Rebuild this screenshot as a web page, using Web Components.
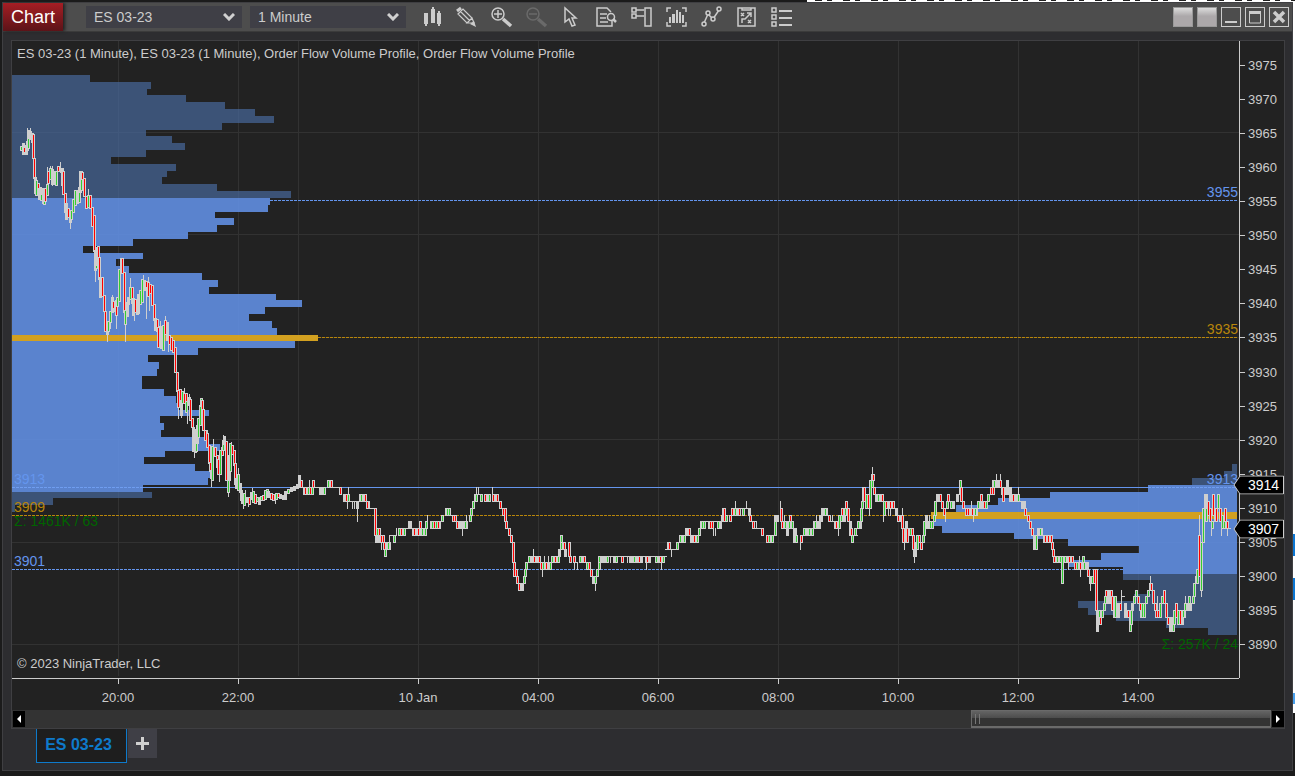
<!DOCTYPE html>
<html lang="en">
<head>
<meta charset="utf-8">
<title>Chart - ES 03-23</title>
<style>
html,body{margin:0;height:100%}
body{background:
 linear-gradient(#0d77d3,#0d77d3) right 534px/2px 22px no-repeat,
 linear-gradient(#0d77d3,#0d77d3) right 578px/2px 22px no-repeat,
 linear-gradient(#4aa0ec,#4aa0ec) right 693px/2px 11px no-repeat,
 repeating-linear-gradient(90deg,#222 0 7px,transparent 7px 12px,#222 12px 17px,transparent 17px 28px) right top/480px 1px no-repeat,
 linear-gradient(90deg,#1b1b1b 807px,#fff 807px) top/100% 2px no-repeat,
 linear-gradient(90deg,transparent 50%,#fff 50%) right top/4px 713px no-repeat,#1b1b1b;
 box-sizing:border-box;padding:2px 2px 5px;display:flex;overflow:hidden;
 font-family:"Liberation Sans",Arial,sans-serif}
</style>
</head>
<body>
<trader-window></trader-window>
<script>
const define=(name,html,setup)=>customElements.define(name,class extends HTMLElement{
  constructor(){super();this.attachShadow({mode:'open'}).innerHTML=html;}
  connectedCallback(){if(setup&&!this.ready){this.ready=true;setup.call(this,this.shadowRoot);}}
});

define('drop-down',`<style>
:host{display:block;width:156px;height:22px;position:relative}
select{appearance:none;width:100%;height:100%;margin:0;border:0;border-radius:0;padding:0 24px 0 8px;background:#3f3f46;color:#ccc;font:14px "Liberation Sans",Arial,sans-serif}
svg{position:absolute;right:7px;top:7px;pointer-events:none}
</style><select></select><svg width="12" height="8" fill="none" stroke="#d0d0d0" stroke-width="3"><path d="M1 1 6 6 11 1"/></svg>`,
function(r){const s=r.querySelector('select');s.setAttribute('aria-label',this.getAttribute('label'));s.add(new Option(this.getAttribute('value')));});

const glyphs={
 'Chart style':'<path fill="#ccc" stroke="none" d="M3 6h4v11H6v2H4v-2H3zM10 2h1V0h2v2h1v14h-4zM16 6h1V4h2v2h1v11h-1v2h-2v-2h-1z"/>',
 'Drawing tools':'<path stroke-width="3" d="m1 4 4-3"/><path stroke-width="1.2" d="m2 7 5-5 9 9-5 5zM4.500 4.500l9 9M11 16l5-5 2 5z"/><path fill="#ccc" stroke="none" d="m14 17 4-3 2 6z"/>',
 'Zoom in':'<circle cx="7" cy="7" r="6"/><path d="M3 7h8M7 3v8"/><path stroke-width="3.5" d="m12 12 8 7"/>',
 'Zoom out':'<g stroke="#6a6a6a"><circle cx="7" cy="7" r="6"/><path d="M3 7h8"/><path stroke-width="3.5" d="m12 12 8 7"/></g>',
 'Cursor':'<path d="M4 1v14l4-3 3 7 3-1-3-7h4z"/>',
 'Data box':'<path d="M15 5l-4-4H1v18h15v-5M4 7h7M4 11h6M4 15h8"/><circle cx="15" cy="10" r="3.5"/><path stroke-width="2.5" d="m17 12 3 3"/>',
 'Chart trader':'<path d="M1 1h4v4H1zM1 7h4v4H1zM5 3h8M5 9h8M14 1h6v18h-6z"/>',
 'Indicators':'<path d="M1 5V1h4M16 1h4v4M20 15v4h-4M5 19H1v-4"/><path fill="#ccc" stroke="none" d="M3 10h2v6H3zM6 7h3v9H6zM10 3h2v13h-2zM13 5h2v11h-2zM16 8h2v8h-2z"/>',
 'Strategies':'<path d="M3 16 7 7l5 5 6-9"/><g fill="#4d4d4d"><circle cx="3" cy="17" r="2"/><circle cx="7" cy="6" r="2"/><circle cx="12" cy="12" r="2"/><circle cx="18" cy="2" r="2"/></g>',
 'Analyzer':'<path d="M2 1h17v18H2zM6 1v2h9V1M5 6l3 3M8 6l-3 3M12 13l3 3M15 13l-3 3M6 16v-4h3l6-6M11 6h4v4"/>',
 'Properties':'<path d="M1 1h4v4H1zM1 8h4v4H1zM1 15h4v4H1z"/><path stroke-width="2" d="M8 4h13M8 11h13M8 18h13"/>'};

define('tool-bar',`<style>
:host{display:flex}
button{width:35px;height:28px;border:0;padding:0;background:none;display:grid;place-items:center}
svg{display:block;overflow:visible;fill:none;stroke:#ccc;stroke-width:1.5}
</style>`,function(r){for(const k in glyphs)r.innerHTML+=`<button aria-label="${k}"><svg width="21" height="21">${glyphs[k]}</svg></button>`;});

define('window-buttons',`<style>
:host{display:flex;gap:4px}
button{box-sizing:border-box;width:20px;height:20px;border:1px solid #ccc;background:none;padding:0;display:grid;place-items:center}
.link{border-color:#999;background:linear-gradient(#dcdcdc,#aca8aa 45%)}
svg{display:block;fill:none;stroke:#ccc}
</style><button class="link" aria-label="Instrument link"></button><button class="link" aria-label="Interval link"></button>
<button aria-label="Minimize"><svg width="18" height="18"><path stroke-width="2" d="M3 14h12"/></svg></button>
<button aria-label="Maximize"><svg width="18" height="18"><path d="M3.500 4v11h11V4"/><path stroke-width="3" d="M3 4.500h12"/></svg></button>
<button aria-label="Close"><svg width="18" height="18"><path stroke-width="3.5" d="m4 4 10 10M14 4 4 14"/></svg></button>`);

define('title-bar',`<style>
:host{display:flex;align-items:center;height:28px;background:#4d4d4d;border-bottom:1px solid #3b3b3b;flex:none}
.name{align-self:stretch;width:60px;flex:none;border:0;padding:0;margin-right:23px;background:linear-gradient(#a51e24,#5c1318);color:#fff;font:18px "Liberation Sans",Arial,sans-serif;box-shadow:2px 0 3px #222}
drop-down{margin-right:8px;flex:none}
window-buttons{margin-left:auto;margin-right:3px}
</style><button class="name">Chart</button><drop-down label="Instrument" value="ES 03-23"></drop-down><drop-down label="Interval" value="1 Minute"></drop-down><tool-bar></tool-bar><window-buttons></window-buttons>`);

/* ---- chart data ---- */
const BASE=3890, Y=p=>Math.floor(644.8-(p-BASE)*6.83);
// volume per price, as the right edge of each bar, from 3973 down
const leftProfile=[90,151,147,186,225,255,274,222,146,172,185,146,111,176,167,162,217,291,270,268,215,234,217,188,133,83,143,116,129,202,218,209,276,302,265,249,272,277,318,295,198,148,159,157,142,142,164,176,178,209,160,164,161,207,220,165,144,195,210,208,143,152,53,15];
// left edge of each bar, from 3916 down
const rightProfile=[1232,1224,1192,1148,1050,998,956,931,933,942,1014,1068,1139,1101,1068,1123,1123,1151,1151,1134,1078,1088,1116,1166,1208];
// overnight sell-off: x, top, bottom, direction
const fall=`21 146 150 g,23 143 154,24 147 152 r,26 145 154,27 141 150,28 137 148 g,28 130 138,30 131 139,32 133 142,33 134 158 r,34 158 178 r,35 177 193,36 180 195 g,38 183 194 r,39 188 199 r,40 187 198,41 194 200 g,43 188 203,44 198 204 g,45 188 201 r,47 184 195 g,48 171 183 r,50 168 179 g,52 169 184,53 173 181 r,54 171 184,56 171 185 g,58 166 171 r,61 168 172 r,62 168 185,63 171 194 r,65 193 212 r,66 203 219,68 208 217 r,70 212 222,71 210 219 g,73 199 212 g,75 190 205 g,77 190 203,79 187 202 g,80 171 192,81 179 190 g,82 172 179 r,84 178 196 r,86 196 208 r,88 195 207 g,90 195 208 r,92 207 226 r,94 215 251 r,95 250 270,96 262 268 g,97 247 265,98 246 257 r,99 257 279 r,100 277 297,102 277 296 r,104 295 311 r,105 311 331 r,107 327 334,108 321 331 g,110 311 322 g,112 297 312,113 301 308 r,115 301 311,116 300 315 r,117 297 306 g,119 269 301 g,121 258 273 g,122 258 273 r,124 272 312 r,125 310 324 g,127 302 316,128 297 304,130 287 299 g,132 287 303 r,133 298 315,135 299 312 r,137 304 314 g,138 294 313,140 290 304 g,142 279 302 g,144 280 290,146 281 287 r,148 282 296 r,150 284 293 r,152 285 305 r,154 304 320 r,155 318 330,157 319 331 r,158 327 347 r,160 326 343,161 328 348,163 325 350 g,165 320 334 r,167 322 340,169 335 344 r,171 337 350 r,173 340 352 r,175 347 372 r,177 372 391 r,178 390 407 r,180 389 400 r,181 400 415,182 391 403 g,184 393 403 r,186 393 404 r,186 401 412 g,189 397 405,190 399 420 r,192 418 427 r,193 427 451,194 440 450 g,195 429 452,196 441 451 g,197 425 443,198 418 437 g,200 405 425 g,201 398 406 g,202 400 413 r,203 409 430 r,205 430 440 r,207 433 447 r,209 445 463 r,210 462 471 r,211 470 478,212 446 480 g,215 447 456 r,217 455 467 r,218 459 474 r,220 450 474 g,222 447 455 r,223 440 450 g,224 436 444,226 441 480 r,228 477 492 g,229 455 480,230 443 471 g,232 445 454 r,234 450 465 r,235 463 484 r,236 478 488,238 474 490 g,240 483 492,241 490 500,242 495 503,244 493 505 g,247 497 502,249 497 504 r,251 492 499,253 491 502 g,255 494 503 r,257 497 501 g,259 497 504,261 496 500 g,263 495 500 r,265 490 499 g,267 489 494 g,268 491 497,271 493 499 r,273 494 500 r,276 493 499 g,278 493 497 r,280 494 498,283 495 499,285 491 499,288 489 493 g,291 487 491,294 486 490,297 484 488,299 475 487`;
const fallWicks=`27 128 150,30 128 138,47 167 186,50 166 172,52 166 186,60 162 170,70 218 229,82 171 174,88 189 197,95 265 282,104 295 320,107 330 342,110 318 329,112 295 300,116 310 329,125 322 342,130 278 290,134 310 321,143 275 280,146 285 319,148 277 284,149 290 311,160 321 330,163 345 350,165 316 322,168 335 352,178 405 419,181 410 418,184 388 395,187 408 424,189 394 399,194 450 458,207 430 435,211 475 487,213 439 450,219 470 482,223 435 440,228 490 497,231 442 447,238 468 476,243 500 509,245 490 496,248 500 507,252 488 494,266 489 492,275 496 504`;
// rest of the session: x, high, low in points over 3890, direction
const rest=`301 24 23 r,305 23 22 r,308 23 22 g,310 23 22 r,312 23 22 g,313 24 23 r,324 23 22 g,328 24 23 g,331 24 23 r,340 23 22 r,346 22 21 r,348 22 21 g,361 22 21 g,365 22 21 r,367 21 20 r,375 20 16 r,376 16 15,377 17 16 g,379 17 16 r,379 16 15,381 16 15 r,383 16 15 r,384 15 14 r,385 14 13 g,388 15 14 g,394 16 15 g,399 17 16 g,401 17 16 r,404 17 16 g,414 17 16 r,418 17 16 r,420 18 17 r,422 17 16 g,425 17 16 g,426 18 17 g,432 18 17 g,434 18 17 r,436 18 17 g,438 18 17 r,442 19 18 g,447 20 19 g,449 20 19 g,453 19 18 r,455 19 18 r,457 18 17 r,459 18 17,465 18 17 g,470 19 18 g,471 20 19 g,473 21 20 g,475 22 21,476 22 21 g,481 22 21 g,485 22 21 r,489 22 21 g,493 22 21 r,497 22 21 r,500 21 20 r,503 20 19 r,505 20 18 r,506 18 17 r,509 17 16 r,511 16 15 r,513 15 12 r,514 12 10 r,516 11 10 r,517 10 9 r,519 9 8 r,522 9 8,524 10 9 g,525 11 10 g,526 12 11 g,529 13 12 g,534 13 12 r,539 13 12 r,541 12 11 r,543 12 11 g,546 12 11 r,550 12 11 g,552 13 12 g,555 13 12 r,558 13 12 g,559 14 13,561 15 14 g,561 16 15 g,564 15 14 r,565 14 13,569 15 13 r,570 13 12 r,574 13 12 r,580 13 12 g,584 13 12 r,587 12 11 g,589 12 11 r,591 11 10 r,593 10 9,595 10 9 g,597 11 10 g,599 12 11 g,599 13 12 g,607 13 12 g,616 13 12 g,622 13 12 r,634 13 12 g,639 13 12 r,647 13 12 r,656 13 12 g,660 13 12 r,663 13 12 g,669 15 14 r,677 15 14 g,680 16 15 g,684 16 15 g,689 17 16 r,694 16 15 r,697 16 15 g,699 17 16 g,702 18 17 g,704 18 17 g,710 18 17 r,712 18 17 r,718 18 17 g,722 19 18 g,723 20 18,724 20 18 r,726 19 18 g,730 19 18 r,732 20 19 r,735 20 19 g,739 20 19 r,743 20 19 g,749 20 19,750 19 18 r,753 18 17 r,762 17 16 r,767 16 15 r,769 16 15 g,772 16 15 g,775 18 16 g,776 19 18 g,777 19 18,781 20 18 r,782 18 17 r,785 18 17 g,787 18 16,790 19 17 r,789 18 17 g,792 18 17 g,795 17 15,796 16 15 g,801 16 15 r,804 17 16 g,809 17 16 g,812 17 16 g,815 18 17 g,820 19 18,825 20 19 g,829 19 18 r,836 18 17 r,839 19 17 g,841 19 18 g,842 20 19 r,844 20 18,845 20 19 g,846 21 20 r,848 20 18 r,850 18 16,851 17 16 r,852 16 15 g,855 17 16 g,858 18 17 g,861 20 18 g,862 21 20 g,863 23 21,864 23 21 r,866 22 20 g,868 22 20 r,870 24 20 g,872 25 23,872 24 23 g,873 25 24 r,874 23 22 r,878 22 21 g,882 22 21 r,884 21 19 g,886 21 20 r,890 21 20 r,893 21 20 r,896 20 19,898 19 18 r,900 19 18,902 19 17 r,903 17 15 r,906 18 16,907 17 15 r,910 17 16 g,912 17 16 r,913 16 14 r,914 14 13 g,915 15 13,917 16 14 g,919 16 15 r,921 15 14 r,923 16 15 g,924 18 16 g,926 19 17,930 18 17 g,932 18 17 g,934 19 18 g,935 21 19 g,937 22 21,940 22 21 r,942 21 20 r,944 20 19 r,947 21 20 g,948 22 21 r,951 21 20 g,953 21 20,957 22 21,960 23 22 g,960 24 23 g,961 23 21 r,963 21 20 r,966 20 19 r,968 20 19 r,972 20 19 r,975 20 19 g,978 21 20 g,981 22 21 r,984 21 20 r,986 21 20 g,988 22 21 g,991 23 22 r,993 23 22 r,994 24 23 g,998 24 23,1000 24 23 r,1002 23 22 g,1003 23 21 r,1006 23 22 g,1007 24 22,1010 23 22,1013 22 21 r,1015 22 21,1018 22 21 g,1022 21 20,1025 20 19 r,1028 19 18 r,1030 18 17 r,1032 17 16 r,1034 16 14,1036 16 14 g,1038 17 16,1040 17 16 g,1045 16 15 r,1048 16 15 r,1051 16 15 r,1052 15 14 r,1053 14 13 r,1054 13 12 r,1057 13 12 g,1060 13 12 g,1062 13 9 g,1065 13 12 g,1069 13 12 r,1072 13 12 r,1075 12 11 r,1077 12 11 g,1080 12 11 r,1083 13 12 g,1084 12 11 g,1087 12 11,1088 11 10 r,1090 10 9,1092 10 9 g,1094 11 9 r,1096 11 5 r,1097 5 2,1099 5 4 g,1100 4 3 r,1102 5 4 g,1104 6 5 g,1105 7 6 g,1106 8 7 r,1109 8 7,1111 8 7 r,1112 7 5 r,1114 6 4,1115 7 4 g,1117 5 4 g,1118 6 4,1120 6 5 r,1125 6 4,1128 5 4 r,1130 4 2 g,1131 5 3 g,1132 6 5,1134 7 6 g,1136 8 7 g,1138 7 6 r,1140 6 5 r,1142 6 4 g,1144 6 4 g,1146 7 6 g,1148 8 7 g,1150 9 8 g,1151 9 8 r,1153 8 6 r,1155 6 5 r,1156 5 4 r,1158 5 4 r,1160 6 4 g,1162 7 6 g,1164 8 6 r,1166 6 4 r,1168 4 3 r,1170 3 2 g,1171 4 2,1173 3 2 g,1174 5 3 g,1176 6 4 r,1178 5 3 g,1180 5 3 r,1182 5 3,1183 5 4 g,1185 6 5 g,1187 6 5,1189 7 6 g,1193 7 6 g,1194 9 7 g,1196 10 9 g,1197 11 9 g,1199 16 10 r,1201 15 8 g,1203 20 15 g,1205 22 18,1206 20 18 g,1208 21 19 r,1210 20 18 r,1212 18 17 g,1213 22 19 r,1215 20 18 g,1216 20 18 r,1218 22 20 g,1220 20 18 r,1222 19 17 g,1224 18 17 g,1225 20 18 r,1227 18 17 r`;
const restWicks=`309 24 23,348 23 22,347 21 20,352 21 20,354 21 20,357 21 18,381 15 14,389 16 15,396 17 16,427 19 18,462 18 16,466 19 18,476 23 22,478 23 22,492 23 22,533 14 13,542 11 10,544 13 12,548 13 12,574 12 11,577 12 11,595 9 8,610 13 12,627 13 12,629 13 12,646 12 11,661 12 11,671 14 13,686 17 16,713 17 16,715 17 16,721 18 17,735 21 20,746 21 20,756 18 17,780 21 18,784 19 18,787 17 16,800 16 14,816 19 18,822 20 18,832 19 18,838 18 16,869 20 19,872 26 25,883 19 18,888 20 19,890 20 19,902 20 19,904 15 14,914 13 12,927 19 17,929 19 17,945 19 18,971 21 20,973 19 18,996 25 24,1000 25 24,1018 23 22,1068 12 11,1079 13 12,1080 11 10,1090 9 8,1121 8 6,1150 10 9,1157 7 5,1185 7 6,1199 19 16,1201 8 7,1205 22 19,1207 22 20,1211 18 16,1213 22 20,1221 18 16,1227 17 16,1185 7 5`;
// overlapping flat candles: from, to, high, low
const blocks=`303 314 23 22,314 320 23 23,319 326 23 22,327 333 24 23,333 341 23 23,343 350 22 21,350 357 21 21,356 359 21 20,359 366 22 21,367 370 21 20,369 374 20 20,384 391 15 14,390 394 16 16,398 405 17 16,405 411 17 17,408 412 18 17,412 420 17 16,420 427 17 16,430 441 18 17,445 451 20 19,450 456 19 19,461 468 18 17,474 483 22 22,484 491 22 21,492 498 22 21,520 524 9 8,528 541 13 12,541 546 12 11,545 551 12 11,551 560 13 12,574 578 12 12,579 586 13 12,598 609 13 12,609 614 13 13,613 618 13 12,618 646 13 13,629 643 13 12,645 651 13 12,651 667 13 13,655 663 13 12,665 677 14 14,667 671 15 14,679 686 16 15,685 691 17 16,690 698 16 15,700 706 18 17,706 720 18 18,708 714 18 17,717 721 18 17,722 727 19 18,731 741 20 19,741 749 20 20,750 756 18 18,752 763 17 17,766 774 16 15,774 779 19 18,785 793 18 17,793 797 17 15,803 813 17 16,813 821 18 17,821 828 20 19,828 836 18 18,834 840 18 17,852 858 16 16,858 862 18 17,875 883 22 21,885 895 21 20,895 898 20 19,898 903 19 18,904 909 17 15,926 934 18 17,937 940 22 21,950 955 21 20,956 960 22 22,966 978 20 19,979 988 21 20,992 1000 24 23,1009 1019 22 21,1018 1024 21 21,1022 1026 21 20,1034 1037 16 14,1038 1043 17 16,1043 1052 16 15,1053 1062 13 12,1063 1074 13 12,1074 1088 12 11,1089 1095 10 9,1097 1101 5 3,1105 1112 7 6,1114 1120 6 4,1122 1125 7 7,1124 1129 5 4,1140 1145 6 4,1156 1161 5 4,1168 1175 4 3,1175 1186 5 4,1186 1192 6 5,1228 1231 17 17`;
const rows=t=>t.split(',').map(r=>r.split(' ')), box=(x,y,w,h,c)=>h>0?`<path fill="${c}" d="M${x} ${y}h${w}v${h}h${-w}z"/>`:'';

function drawPlot(){
  const grey='#cfcfcf',core={r:'#f00',g:'#32cd32'};let s='';
  for(const x of [118,238,298,418,538,658,778,898,1018,1138])s+=box(x,41,1,635,'#323232');
  for(let p=3965;p>=3890;p-=15)s+=box(12,Y(p),1227,1,'#323232');
  const bars=(list,top,area,rect)=>list.forEach((e,i)=>{const p=top-i,a=Y(p+.5)+1,b=Y(p-.5)+1;
    s+=rect(e,a,b-a,p===area[2]?'#daa520f5':p<=area[0]&&p>=area[1]?'#6495edd8':'#4a6ea5a5');});
  const dash=(x1,x2,p,c,d='3 1')=>{s+=`<path stroke="${c}" stroke-dasharray="${d}" d="M${x1} ${Y(p)+.5}H${x2}"/>`;};
  bars(leftProfile,3973,[3955,3913,3935],(e,y,h,c)=>box(12,y,e-12,h,c));
  bars(rightProfile,3916,[3913,3901,3909],(e,y,h,c)=>box(e,y,1237-e,h,c));
  dash(270,1238,3955,'#6495ed');dash(318,1238,3935,'#b8860b');
  dash(12,143,3913,'#6f9df0');dash(143,1148,3913,'#6495ed','none');dash(1148,1237,3913,'#6f9df0');
  dash(12,931,3909,'#b8860b');dash(12,1123,3901,'#6495ed');
  const body=(x,a,b,c)=>{s+=box(x-1,a,3,b-a+1,grey);if(c)s+=box(x,a+1,1,b-a-1,core[c]);};
  for(const [x,a,b] of rows(fallWicks))s+=box(+x,+a,1,b-a,grey);
  for(const [x,a,b,c] of rows(fall))body(+x,+a,+b,c);
  for(const [x,a,b] of rows(restWicks))s+=box(+x,Y(BASE+ +a),1,Y(BASE+ +b)-Y(BASE+ +a)+1,grey);
  for(const [x,e,a,b] of rows(blocks))s+=box(+x,Y(BASE+ +a),e-x,Y(BASE+ +b)-Y(BASE+ +a)+1,grey);
  for(const [x,a,b,c] of rows(rest))body(+x,Y(BASE+ +a),Y(BASE+ +b),c);
  return s;
}

define('price-plot',`<style>
:host{display:block;position:relative;min-width:0;min-height:0;color:#ccc;font-size:13px;line-height:16px;overflow:hidden}
svg{position:absolute;inset:0;width:100%;height:100%;shape-rendering:crispEdges}
header,footer{position:absolute;left:5px;white-space:nowrap}
header{top:5px}footer{bottom:6px}
.note{position:absolute;font-size:14px;white-space:nowrap;transform:translateY(-50%)}
.l{left:2px}.r{right:1px}.blue{color:#6495ed}.gold{color:#b8860b}.sum{color:#006400}
</style><svg viewBox="12 41 1227 637" preserveAspectRatio="none" fill="none" role="img" aria-label="Price chart with volume profiles"></svg>
<header>ES 03-23 (1 Minute), ES 03-23 (1 Minute), Order Flow Volume Profile, Order Flow Volume Profile</header>
<footer>© 2023 NinjaTrader, LLC</footer>`,function(r){
  r.querySelector('svg').innerHTML=drawPlot();
  for(const [t,cls,y] of [['3955','r blue',192],['3935','r gold',329],['3913','r blue',479],['3913','l blue',479],['3909','l gold',507],['Σ: 1461K / 63','l sum',521],['3901','l blue',561],['Σ: 257K / 24','r sum',644]]){
    const n=document.createElement('span');n.className='note '+cls;n.textContent=t;n.style.top=(y-41)/637*100+'%';r.append(n);}
});

define('price-axis',`<style>
:host{display:flex;flex-direction:column;box-sizing:border-box;padding:7px 0 16px;border-left:1px solid #ccc;position:relative;color:#ccc;font-size:13px}
.p{flex:1;display:flex;align-items:center;gap:3px}
.p::before{content:"";width:5px;height:1px;background:#ccc}
.m{position:absolute;left:-7px;width:51px;height:19px;transform:translateY(-50%);color:#fff;font-size:14px;line-height:19px}
.m svg{position:absolute;inset:0}.m span{position:relative;padding-left:15px}
</style>`,function(r){
  for(let p=3975;p>=3890;p-=5)r.innerHTML+=`<div class="p">${p}</div>`;
  for(const [p,y] of [[3914,485],[3907,529]])r.innerHTML+=`<div class="m" style="top:${(y-41)/637*100}%"><svg width="51" height="19"><path d="M1 9.500 7 .5h43.500v18H7z" fill="#000" stroke="#ccc"/></svg><span>${p}</span></div>`;
});

define('time-axis',`<style>
:host{display:flex;height:32px;border-top:1px solid #ccc;color:#ccc;font-size:13px;box-sizing:border-box}
div{flex:120 1 0;min-width:0;display:flex;flex-direction:column;align-items:center;line-height:16px;gap:6px;white-space:nowrap}
div::before{content:"";width:1px;height:5px;background:#ccc}
i{flex:60 1 0}.a{flex-grow:46}.z{flex-grow:41}
</style><i class="a"></i><div>20:00</div><div>22:00</div><i></i><div>10 Jan</div><div>04:00</div><div>06:00</div><div>08:00</div><div>10:00</div><div>12:00</div><div>14:00</div><i class="z"></i>`);

define('time-scroll',`<style>
:host{display:flex;height:18px;background:#333;align-items:center;padding:0 0 0 1px}
button{width:12px;height:16px;background:#000;border:0;padding:0;display:grid;place-items:center;flex:none}
.track{flex:1;height:18px;display:flex;margin-right:1px}
.track::before{content:"";flex:950 1 0}
.thumb{box-sizing:border-box;flex:296 1 0;border:1px solid #6a6a6a;border-bottom-width:2px;background:linear-gradient(#646464,#4a4a4a 50%,#333 50%);display:flex;align-items:center;gap:3px;padding-left:3px}
.thumb i{width:1px;height:10px;background:#777}
svg{fill:#fff}
</style><button aria-label="Scroll left"><svg width="4" height="8"><path d="M4 0v8L0 4z"/></svg></button><div class="track"><div class="thumb"><i></i><i></i></div></div><button aria-label="Scroll right"><svg width="4" height="8"><path d="M0 0v8l4-4z"/></svg></button>`);

define('chart-panel',`<style>
:host{display:grid;grid-template:minmax(0,1fr) auto auto/minmax(0,1fr) 45px;background:#222;border:1px solid #3f3f42}
time-scroll{grid-column:1/-1}
</style><price-plot></price-plot><price-axis></price-axis><time-axis></time-axis><span></span><time-scroll></time-scroll>`);

define('chart-tabs',`<style>
:host{display:flex;align-items:flex-start;gap:1px;height:41px;padding-left:33px;flex:none}
button{border:0;padding:0;box-sizing:border-box}
.tab{width:91px;height:34px;padding:0 6px 2px 0;border:1px solid #0e7acb;border-top:0;background:#1e1e1e;color:#0e7acb;font:bold 16px "Liberation Sans",Arial,sans-serif}
.add{width:29px;height:29px;background:#3f3f46;display:grid;place-items:center}
</style><button class="tab">ES 03-23</button><button class="add" aria-label="New tab"><svg width="13" height="13" stroke="#d0d0d0" stroke-width="3"><path d="M0 6.500h13M6.500 0v13"/></svg></button>`);

define('trader-window',`<style>
:host{display:flex;flex-direction:column;flex:1;min-width:0;box-sizing:border-box;border:1px solid #3f3f42;background:#2d2d30}
chart-panel{flex:1;min-height:0;margin:8px 7px 0 8px}
</style><title-bar></title-bar><chart-panel></chart-panel><chart-tabs></chart-tabs>`);
</script>
</body>
</html>
